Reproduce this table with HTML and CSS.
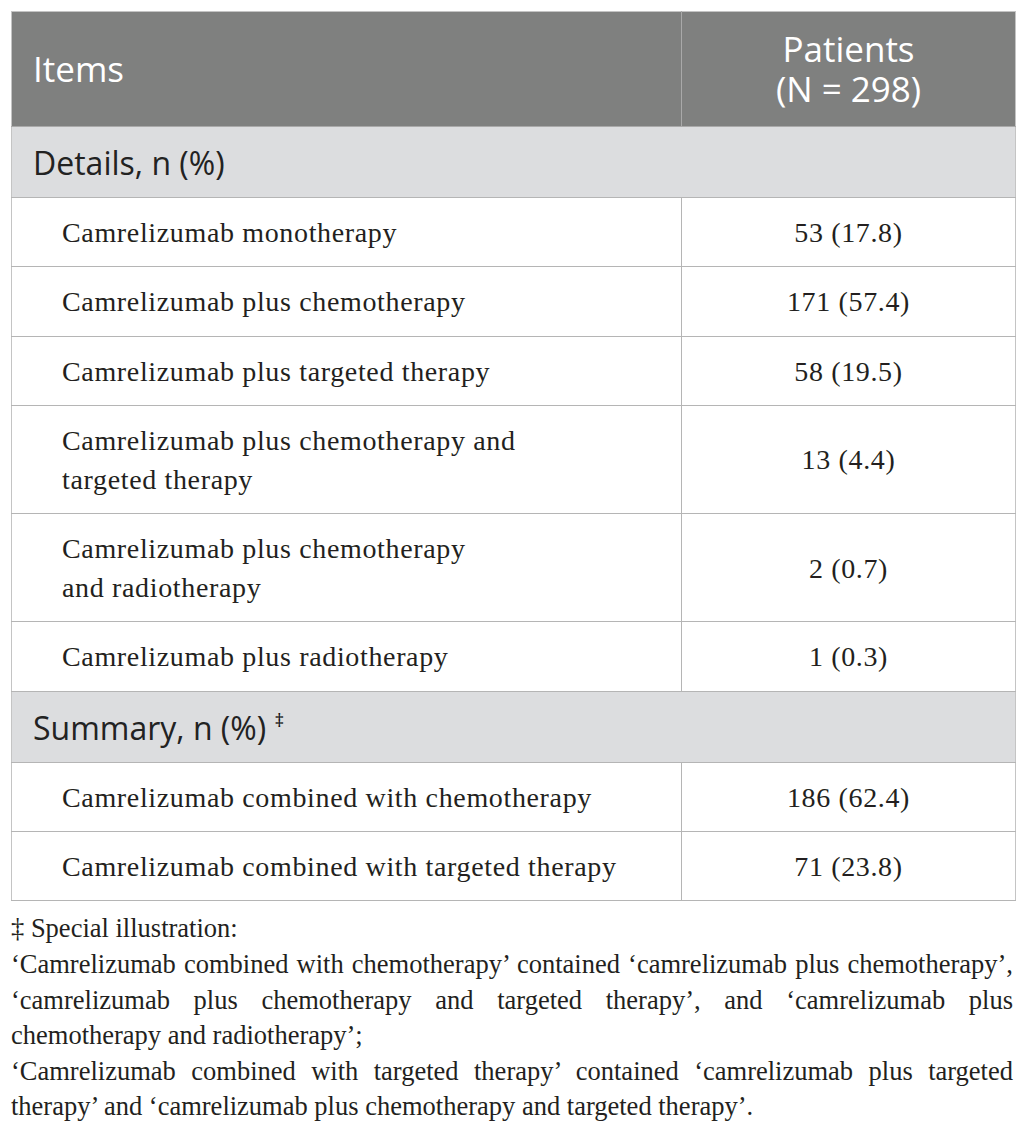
FILE: index.html
```html
<!DOCTYPE html>
<html lang="en">
<head>
<meta charset="utf-8">
<title>Camrelizumab treatment details</title>
<link rel="stylesheet" href="styles.css">
</head>
<body>
<div class="page">
  <table class="tbl">
    <colgroup>
      <col class="col-items">
      <col class="col-val">
    </colgroup>
    <thead>
      <tr class="head">
        <th class="h-items">Items</th>
        <th class="h-val"><span class="hl">Patients</span><span class="hl">(N = 298)</span></th>
      </tr>
    </thead>
    <tbody>
      <tr class="section"><td colspan="2">Details, n (%)</td></tr>
      <tr class="row"><td class="lbl">Camrelizumab monotherapy</td><td class="val">53 (17.8)</td></tr>
      <tr class="row"><td class="lbl">Camrelizumab plus chemotherapy</td><td class="val">171 (57.4)</td></tr>
      <tr class="row"><td class="lbl">Camrelizumab plus targeted therapy</td><td class="val">58 (19.5)</td></tr>
      <tr class="row"><td class="lbl">Camrelizumab plus chemotherapy and<br>targeted therapy</td><td class="val">13 (4.4)</td></tr>
      <tr class="row"><td class="lbl">Camrelizumab plus chemotherapy<br>and radiotherapy</td><td class="val">2 (0.7)</td></tr>
      <tr class="row"><td class="lbl">Camrelizumab plus radiotherapy</td><td class="val">1 (0.3)</td></tr>
      <tr class="section"><td colspan="2">Summary, n (%) <sup class="dag">‡</sup></td></tr>
      <tr class="row"><td class="lbl">Camrelizumab combined with chemotherapy</td><td class="val">186 (62.4)</td></tr>
      <tr class="row"><td class="lbl">Camrelizumab combined with targeted therapy</td><td class="val">71 (23.8)</td></tr>
    </tbody>
  </table>
  <div class="note">
    <span class="ln">‡ Special illustration:</span>
    <span class="ln just">‘Camrelizumab combined with chemotherapy’ contained ‘camrelizumab plus chemotherapy’,</span>
    <span class="ln just">‘camrelizumab plus chemotherapy and targeted therapy’, and ‘camrelizumab plus</span>
    <span class="ln">chemotherapy and radiotherapy’;</span>
    <span class="ln just">‘Camrelizumab combined with targeted therapy’ contained ‘camrelizumab plus targeted</span>
    <span class="ln">therapy’ and ‘camrelizumab plus chemotherapy and targeted therapy’.</span>
  </div>
</div>
</body>
</html>
```

FILE: styles.css
```css
html, body {
  margin: 0;
  padding: 0;
  background: #ffffff;
}

.page {
  padding: 11px 11px 0 11px;
}

.tbl {
  width: 1004px;
  border-collapse: collapse;
  table-layout: fixed;
  border: 1px solid #c4c4c4;
}

.col-items { width: 670px; }
.col-val { width: 334px; }

.head th {
  background: #7f807f;
  color: #ffffff;
  font-family: "Open Sans", "Noto Sans", sans-serif;
  font-weight: 400;
  font-size: 35px;
  line-height: 40px;
  padding: 17px 0 17px 0;
  border-bottom: 1px solid #a9a9a9;
}

.hl {
  display: block;
}

.h-items {
  text-align: left;
  padding-left: 21px !important;
  border-right: 1px solid #a9a9a9;
}

.h-val {
  text-align: center;
}

.section td {
  background: #dcdddf;
  color: #222222;
  font-family: "Open Sans", "Noto Sans", sans-serif;
  font-size: 32px;
  line-height: 41px;
  padding: 15px 0 14px 21px;
  border-top: 1px solid #b5b5b5;
  border-bottom: 1px solid #b5b5b5;
}

.dag {
  font-size: 19px;
  vertical-align: 13px;
  line-height: 0;
  color: #111111;
}

.row td {
  font-family: "Liberation Serif", "Times New Roman", serif;
  font-size: 28px;
  letter-spacing: 0.65px;
  line-height: 39px;
  color: #231f20;
  padding: 15px 0 14.3px 0;
  border-top: 1px solid #b5b5b5;
  border-bottom: 1px solid #b5b5b5;
  vertical-align: middle;
}

.row .lbl {
  padding-left: 50px;
  border-right: 1px solid #b5b5b5;
}

.row .val {
  text-align: center;
}

.note {
  width: 1002px;
  margin-top: 10px;
  font-family: "Liberation Serif", "Times New Roman", serif;
  font-size: 26.5px;
  line-height: 35.6px;
  color: #231f20;
}

.ln {
  display: block;
  white-space: nowrap;
}

.ln.just {
  text-align: justify;
  text-align-last: justify;
}
```
